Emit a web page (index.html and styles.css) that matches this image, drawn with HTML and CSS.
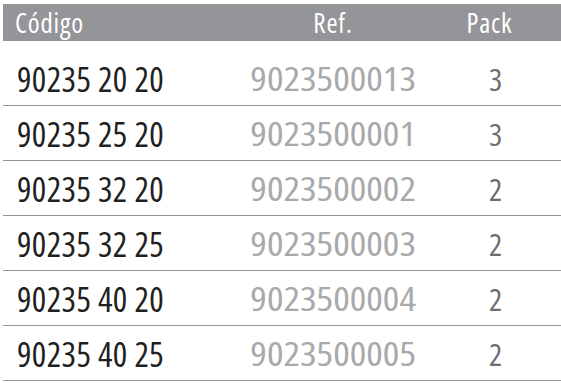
FILE: index.html
```html
<!DOCTYPE html>
<html lang="es">
<head>
<meta charset="utf-8">
<title>Tabla</title>
<link rel="stylesheet" href="styles.css">
</head>
<body>
<div class="table">
  <div class="row head">
    <div class="cell code">Código</div>
    <div class="cell ref">Ref.</div>
    <div class="cell pack">Pack</div>
  </div>
  <div class="body">
    <div class="row item"><div class="cell code">90235 20 20</div><div class="cell ref"><span class="wide">9023500013</span></div><div class="cell pack">3</div></div>
    <div class="row item"><div class="cell code">90235 25 20</div><div class="cell ref"><span class="wide">9023500001</span></div><div class="cell pack">3</div></div>
    <div class="row item"><div class="cell code">90235 32 20</div><div class="cell ref"><span class="wide">9023500002</span></div><div class="cell pack">2</div></div>
    <div class="row item"><div class="cell code">90235 32 25</div><div class="cell ref"><span class="wide">9023500003</span></div><div class="cell pack">2</div></div>
    <div class="row item"><div class="cell code">90235 40 20</div><div class="cell ref"><span class="wide">9023500004</span></div><div class="cell pack">2</div></div>
    <div class="row item"><div class="cell code">90235 40 25</div><div class="cell ref"><span class="wide">9023500005</span></div><div class="cell pack">2</div></div>
  </div>
</div>
</body>
</html>
```
FILE: styles.css
```css
html, body { background: #fff; }
body {
  margin: 4px 0 0 3px;
  font-family: "Open Sans", "Liberation Sans", sans-serif;
}
.row {
  display: grid;
  grid-template-columns: 245px 170px 1fr;
  white-space: nowrap;
}
.cell.code { padding-left: 14px; text-align: left; }
.cell.ref, .cell.pack { text-align: center; }

.head {
  background: #939598;
  color: #fff;
  height: 37px;
  font-size: 27px;
  line-height: 37px;
  font-stretch: 75%;
  letter-spacing: 0.8px;
}
.head .code { padding-left: 12px; }

.body { padding-top: 10px; }
.item {
  height: 52px;
  padding-top: 2px;
  line-height: 52px;
  font-size: 34px;
  font-stretch: 75%;
  border-bottom: 1px solid #939598;
}
.item .code { color: #231f20; letter-spacing: 0.4px; padding-left: 14px; }
.item .ref { color: #a7a9ac; font-size: 33px; }
.item .ref .wide { display: inline-block; transform: scaleX(1.18); }
.item .pack { color: #6d6e71; font-size: 31px; padding-left: 12px; }
```
